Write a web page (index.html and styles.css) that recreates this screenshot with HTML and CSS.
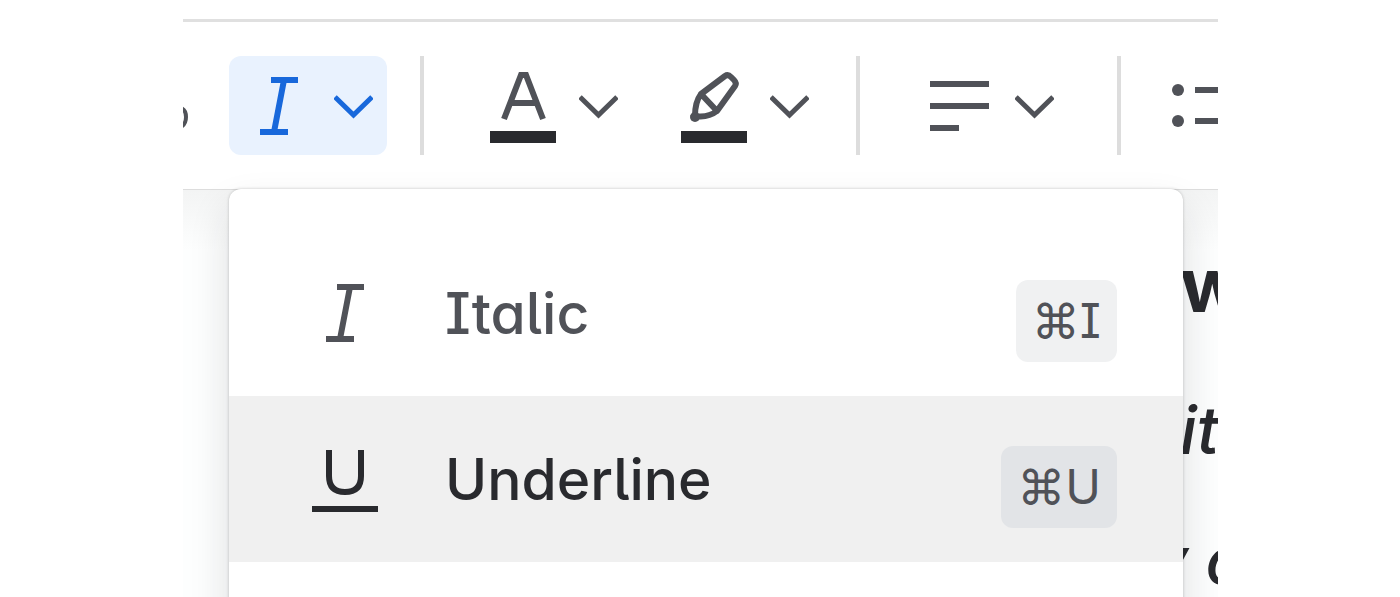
FILE: index.html
```
<!DOCTYPE html>
<html lang="en">
<head>
    <meta charset="utf-8">
    <title>Editor</title>
    <link rel="stylesheet" href="styles.css">
</head>
<body>
<div class="editor">
    <div class="toolbar" role="toolbar" aria-label="Formatting">
        <div class="previous">
            <svg width="5" height="24" viewBox="0 0 5 24"><path d="M-2 2Q3 4 3 11Q3 18-2 21" fill="none" stroke="currentColor" stroke-width="4"/></svg>
        </div>
        <button class="tool active" type="button" aria-label="Italic" aria-expanded="true">
            <svg class="icon" viewBox="0 0 66 98"><path d="M26 23h27M15 75h28M39 23L29 75" fill="none" stroke="currentColor" stroke-width="6"/></svg>
            <svg class="chevron" viewBox="0 0 39 26"><path d="M1 4l18.500 18L38 4" fill="none" stroke="currentColor" stroke-width="5"/></svg>
        </button>
        <span class="divider"></span>
        <button class="tool" type="button" aria-label="Text color">
            <svg class="icon" viewBox="0 0 66 98"><path d="M14 62L31 18h5l17 44M20 46h27" fill="none" stroke="currentColor" stroke-width="6"/><path class="swatch" d="M0 74h66v12H0z"/></svg>
            <svg class="chevron" viewBox="0 0 39 26"><path d="M1 4l18.500 18L38 4" fill="none" stroke="currentColor" stroke-width="5"/></svg>
        </button>
        <button class="tool" type="button" aria-label="Highlight color">
            <svg class="icon" viewBox="0 0 66 98"><path d="M20 37L44 19q3-2 6 1l3 3q3 3 1 6L36 54L20 37zM20 37q-6 8-6 22q13 2 22-5M14 59l-3 2" fill="none" stroke="currentColor" stroke-width="6" stroke-linejoin="round"/><circle cx="14" cy="60" r="5" fill="currentColor"/><path class="swatch" d="M0 74h66v12H0z"/></svg>
            <svg class="chevron" viewBox="0 0 39 26"><path d="M1 4l18.500 18L38 4" fill="none" stroke="currentColor" stroke-width="5"/></svg>
        </button>
        <span class="divider"></span>
        <button class="tool" type="button" aria-label="Alignment">
            <svg class="icon" viewBox="0 0 66 98"><path d="M4 27h59M4 49h59M4 71h29" fill="none" stroke="currentColor" stroke-width="6"/></svg>
            <svg class="chevron" viewBox="0 0 39 26"><path d="M1 4l18.500 18L38 4" fill="none" stroke="currentColor" stroke-width="5"/></svg>
        </button>
        <span class="divider before-list"></span>
        <button class="tool" type="button" aria-label="List">
            <svg class="icon" viewBox="0 0 66 98"><circle cx="8" cy="33" r="6" fill="currentColor"/><circle cx="8" cy="64" r="6" fill="currentColor"/><path d="M25 33h38M25 64h38" fill="none" stroke="currentColor" stroke-width="6"/></svg>
        </button>
    </div>
    <div class="document">
        <p class="heading">w</p>
        <p><em>it</em></p>
        <p class="outdent"><em>y c</em></p>
    </div>
    <div class="menu" role="menu">
        <button class="item" type="button" role="menuitem">
            <svg class="icon" viewBox="0 0 66 98"><path d="M25 23h27M14 75h28M38 23L28 75" fill="none" stroke="currentColor" stroke-width="6"/></svg>
            <span class="label">Italic</span>
            <kbd>⌘I</kbd>
        </button>
        <button class="item selected" type="button" role="menuitem">
            <svg class="icon" viewBox="0 0 66 98"><path d="M17 20v26q0 16 16 16t16-16V20M0 79h66" fill="none" stroke="currentColor" stroke-width="6"/></svg>
            <span class="label">Underline</span>
            <kbd>⌘U</kbd>
        </button>
    </div>
</div>
</body>
</html>
```
FILE: styles.css
```
* {
    box-sizing: border-box;
}

body {
    margin: 0;
    background: #fff;
    color: #505258;
    font-family: Inter, "Liberation Sans", sans-serif;
    font-weight: 500;
    font-feature-settings: "cv05", "cv08", "cv11";
}

button, kbd {
    font: inherit;
    font-feature-settings: inherit;
    color: inherit;
}

.editor {
    position: relative;
    display: flex;
    flex-direction: column;
    height: 100vh;
    margin: 0 182px 0 183px;
    padding-top: 19px;
    overflow: hidden;
}

.toolbar {
    display: flex;
    flex: none;
    gap: 33px;
    padding: 34px 0;
    border-top: 3px solid #e0e0e0;
    overflow: hidden;
}

.previous {
    display: flex;
    flex: none;
    align-items: center;
    width: 13px;
    padding-top: 24px;
}

.tool {
    display: flex;
    flex: none;
    align-items: center;
    gap: 23px;
    height: 99px;
    padding: 0 14px 0 16px;
    border: 0;
    border-radius: 12px;
    background: none;
}

.tool.active {
    background: #e9f2fe;
    color: #1868db;
}

.icon {
    flex: none;
    width: 66px;
    height: 98px;
}

.chevron {
    width: 39px;
    height: 26px;
}

.swatch {
    fill: #292a2e;
}

.divider {
    flex: none;
    width: 4px;
    margin-right: 17px;
    background: #ddd;
}

.divider.before-list {
    margin: 0 0 0 16px;
}

.document {
    flex: 1;
    padding: 29px 0 0 997px;
    border-top: 1px solid #ddd;
    background: linear-gradient(#f3f4f4, #fdfefe 60px);
    color: #292a2e;
    font-size: 66px;
    line-height: 130px;
    white-space: nowrap;
}

.document p {
    margin: 0;
}

.document .heading {
    margin-bottom: 16px;
    font-size: 76px;
    font-weight: 700;
}

.outdent {
    text-indent: -30px;
}

.menu {
    position: absolute;
    top: 189px;
    right: 35px;
    bottom: -40px;
    left: 46px;
    padding-top: 41px;
    border-radius: 12px;
    background: #fff;
    box-shadow: 0 0 3px #1e1f2140, 0 20px 40px #1e1f2124;
}

.item {
    display: flex;
    align-items: center;
    width: 100%;
    height: 166px;
    padding: 0 66px 0 83px;
    border: 0;
    background: none;
    font-size: 57px;
    text-align: left;
}

.item.selected {
    background: #f0f0f0;
}

.selected .icon,
.selected .label {
    color: #292a2e;
}

.label {
    flex: 1;
    padding-left: 67px;
}

kbd {
    height: 82px;
    margin-top: 16px;
    padding: 0 16px;
    border-radius: 12px;
    background: #f0f1f2;
    font-size: 48px;
    font-weight: 400;
    line-height: 82px;
}

.selected kbd {
    background: #e2e4e7;
}
```
